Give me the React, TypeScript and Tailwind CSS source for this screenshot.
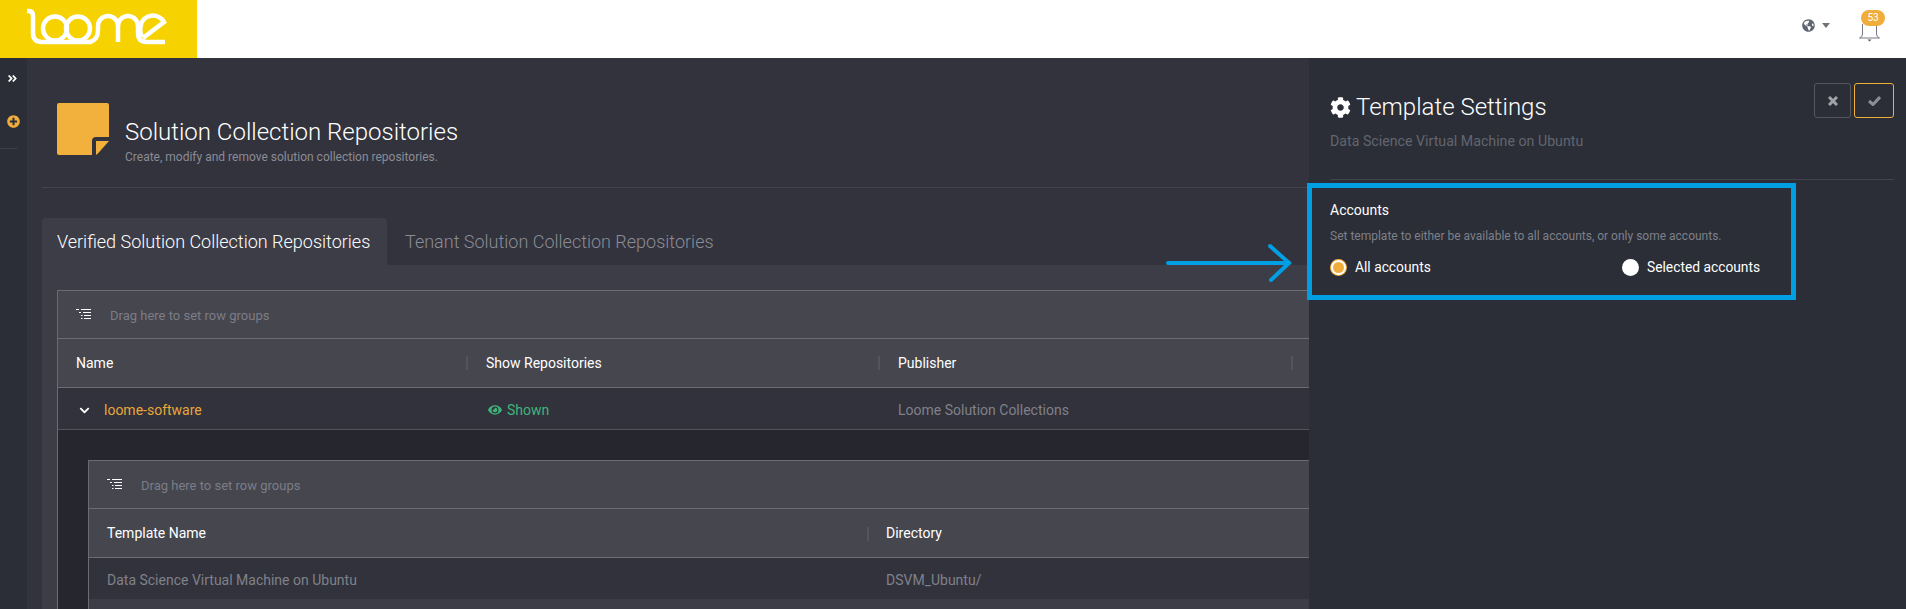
import React from "react";
import { FaAngleDoubleRight, FaPlusCircle, FaCog, FaEye, FaGlobeAmericas, FaChevronDown } from "react-icons/fa";

function Logo() {
  return (
    <svg width="197" height="58" viewBox="0 0 197 58" fill="none" stroke="#fff" strokeWidth="4.5" strokeLinecap="butt">
      <path d="M27 11 H29 Q33 11 33 16 V33 Q33 42 42 42 H92" />
      <circle cx="55" cy="28.5" r="12" />
      <circle cx="78" cy="28.5" r="12" />
      <path d="M90 42 Q98 40 98 30 V26 A10 10 0 0 1 118 26 V42" />
      <path d="M118 26 A10 10 0 0 1 138 26 V33 Q138 42 147 42 H165" />
      <path d="M143 38 L164 22 A12 10.5 0 0 0 141 25 Q139 31 142 37" />
    </svg>
  );
}

function GroupIcon() {
  return (
    <svg width="16" height="12" viewBox="0 0 16 12" stroke="#fff" strokeWidth="1" fill="none">
      <path d="M0 .5H3M5 .5H15" />
      <path d="M3 3.5H5M7 3.5H15" />
      <path d="M5 6.5H6.5M8 6.5H15" />
      <path d="M5 9.5H6.5M8 9.5H15" />
    </svg>
  );
}

function Sep() {
  return <span className="w-[2px] h-[14px] bg-[#54545d] shrink-0" />;
}

function Toolbar() {
  return (
    <div className="h-[48px] border-b border-[#6b6c75] flex items-center pl-[18px] gap-[18px] bg-[#46464f]">
      <GroupIcon />
      <span className="text-[13px] text-[#7c7d86] pt-[2px]">Drag here to set row groups</span>
    </div>
  );
}

function Radio({ on, label, className }: { on?: boolean; label: string; className?: string }) {
  return (
    <div className={"flex items-center gap-[8px] " + (className ?? "")}>
      {on ? (
        <span className="w-[15px] h-[15px] m-px rounded-full bg-[#f0ad3c] border-2 border-white ring-1 ring-[#f0ad3c]" />
      ) : (
        <span className="w-[17px] h-[17px] rounded-full bg-white" />
      )}
      <span className="text-[13.8px] text-white">{label}</span>
    </div>
  );
}

export default function App() {
  return (
    <div className="w-[1906px] h-[609px] overflow-hidden flex flex-col relative font-['Roboto',sans-serif]">
      <header className="h-[58px] bg-white flex items-start shrink-0">
        <div className="w-[197px] h-[58px] bg-[#f5d200]">
          <Logo />
        </div>
        <div className="ml-auto flex items-start">
          <div className="flex items-center gap-[7px] mt-[19px]">
            <FaGlobeAmericas className="w-[13px] h-[13px] text-[#5f6670]" />
            <svg width="8" height="5" viewBox="0 0 8 5" className="shrink-0">
              <path d="M0 0H8L4 5Z" fill="#6f7278" />
            </svg>
          </div>
          <div className="relative w-[24px] h-[44px] ml-[31px] mr-[21px] mt-[10px]">
            <svg className="absolute left-[-2px] top-[14px]" width="22" height="18" viewBox="0 0 22 18" fill="none" stroke="#747882" strokeWidth="1">
              <path d="M3.5 0V10Q3.5 13 .5 14H20.5Q17.5 13 17.5 10V0" />
              <path d="M8.5 15.5H12.5L10.5 17.5Z" fill="#555a63" stroke="none" />
            </svg>
            <span className="absolute left-0 top-0 w-[24px] h-[16px] rounded-full bg-[#f0ad3c] text-white text-[10px] leading-[16px] text-center">53</span>
          </div>
        </div>
      </header>

      <div className="flex flex-1 min-h-0">
        <aside className="w-[27px] shrink-0 bg-[#2b2e37] flex flex-col">
          <FaAngleDoubleRight className="w-[11px] h-[11px] text-white ml-[7px] mt-[15px]" />
          <FaPlusCircle className="w-[13px] h-[13px] text-[#f0ad3c] ml-[7px] mt-[31px]" />
          <div className="h-px w-[17px] bg-[#3d404a] mt-[20px]" />
        </aside>

        <main className="flex-1 min-w-0 overflow-hidden bg-[#32333d] pl-[15px]">
          <div className="flex pl-[15px] pt-[45px] gap-[16px] h-[130px] border-b border-[#41434f]">
            <svg width="52" height="52" viewBox="0 0 52 52" className="shrink-0">
              <path d="M2 0H50Q52 0 52 2V34H39Q35 34 35 38V52H2Q0 52 0 50V2Q0 0 2 0Z" fill="#f2b13d" />
              <path d="M39 38H52L40 51.5H39Z" fill="#f2b13d" />
            </svg>
            <div className="pt-[14px]">
              <h1 className="text-[24px] leading-[30px] font-light text-white">Solution Collection Repositories</h1>
              <p className="text-[12px] leading-[16px] text-[#8b8c95] mt-[2px]">Create, modify and remove solution collection repositories.</p>
            </div>
          </div>

          <div className="flex mt-[30px] h-[47px]">
            <div className="w-[345px] rounded-t bg-[#3c3d47] flex items-center pl-[15px] text-[18px] font-light text-white pb-[1px]">Verified Solution Collection Repositories</div>
            <div className="pl-[18px] flex items-center text-[18px] font-light text-[#8b8c95]">Tenant Solution Collection Repositories</div>
          </div>

          <div className="w-[1400px] bg-[#3c3d47] pl-[15px] pt-[25px]">
            <div className="border-l border-t border-[#6b6c75] bg-[#25262e]">
              <Toolbar />
              <div className="h-[49px] border-b border-[#6b6c75] bg-[#46464f] grid grid-cols-[408px_412px_413px_1fr] items-center text-[14px] text-white">
                <div className="pl-[18px]">Name</div>
                <div className="flex items-center gap-[18px]"><Sep />Show Repositories</div>
                <div className="flex items-center gap-[18px]"><Sep />Publisher</div>
                <div className="flex"><Sep /></div>
              </div>
              <div className="h-[42px] pt-[3px] border-b border-[#53545d] bg-[#31323b] grid grid-cols-[408px_412px_413px_1fr] items-center text-[14px]">
                <div className="flex items-center pl-[21px] gap-[14px] text-[#e8a73a]">
                  <FaChevronDown className="w-[11px] h-[11px] text-white" />
                  loome-software
                </div>
                <div className="flex items-center gap-[5px] pl-[22px] text-[#3fb57c]">
                  <FaEye className="w-[14px] h-[14px]" />
                  Shown
                </div>
                <div className="pl-[20px] text-[#80818a]">Loome Solution Collections</div>
              </div>
              <div className="pl-[30px] pt-[30px]">
                <div className="border-l border-t border-[#6b6c75]">
                  <Toolbar />
                  <div className="h-[49px] pt-[1px] border-b border-[#6b6c75] bg-[#46464f] grid grid-cols-[778px_1fr] items-center text-[14px] text-white">
                    <div className="pl-[18px]">Template Name</div>
                    <div className="flex items-center gap-[17px]"><Sep />Directory</div>
                  </div>
                  <div className="h-[41px] pt-[3px] bg-[#31323b] grid grid-cols-[778px_1fr] items-center text-[14px] text-[#80818a]">
                    <div className="pl-[18px]">Data Science Virtual Machine on Ubuntu</div>
                    <div className="pl-[19px]">DSVM_Ubuntu/</div>
                  </div>
                  <div className="h-[41px] bg-[#3c3d47]" />
                </div>
              </div>
            </div>
          </div>
        </main>

        <section className="w-[597px] shrink-0 bg-[#2b2e37] px-[21px] pr-[12px]">
          <div className="flex items-start justify-between h-[122px] border-b border-[#41434f]">
            <div className="pt-[33px]">
              <div className="flex items-center gap-[5px] h-[32px]">
                <FaCog className="w-[21px] h-[21px] text-white" />
                <h2 className="text-[24px] font-light text-white leading-[32px]">Template Settings</h2>
              </div>
              <p className="text-[14.2px] text-[#62656e] mt-[8px] leading-[20px]">Data Science Virtual Machine on Ubuntu</p>
            </div>
            <div className="flex gap-[3px] mt-[25px]">
              <button className="w-[37px] h-[35px] rounded-[3px] border border-[#54575f] flex items-center justify-center">
                <svg width="10" height="10" viewBox="0 0 10 10" stroke="#a0a3aa" strokeWidth="3" fill="none">
                  <path d="M1 1L9 9M9 1L1 9" />
                </svg>
              </button>
              <button className="w-[40px] h-[35px] rounded-[3px] border border-[#f0ad3c] flex items-center justify-center">
                <svg width="13" height="10" viewBox="0 0 13 10" stroke="#8c8f96" strokeWidth="3" fill="none">
                  <path d="M1 5L5 8.5L12 1" />
                </svg>
              </button>
            </div>
          </div>
          <div className="pt-[20px]">
            <h3 className="text-[14px] leading-[20px] text-white">Accounts</h3>
            <p className="text-[12px] leading-[16px] text-[#7e8089] mt-[8px]">Set template to either be available to all accounts, or only some accounts.</p>
            <div className="flex items-center mt-[13px] h-[20px]">
              <Radio on label="All accounts" className="w-[292px]" />
              <Radio label="Selected accounts" />
            </div>
          </div>
        </section>
      </div>

      {/* annotation overlays */}
      <div className="absolute left-[1307px] top-[183px] w-[489px] h-[117px] border-[5px] border-[#009fe3]" />
      <svg className="absolute left-[1165px] top-[243px]" width="128" height="40" viewBox="0 0 128 40" fill="none" stroke="#009fe3" strokeWidth="4" strokeLinecap="round">
        <path d="M3 20H124" />
        <path d="M105 3L124 20L106 37" />
      </svg>
    </div>
  );
}
